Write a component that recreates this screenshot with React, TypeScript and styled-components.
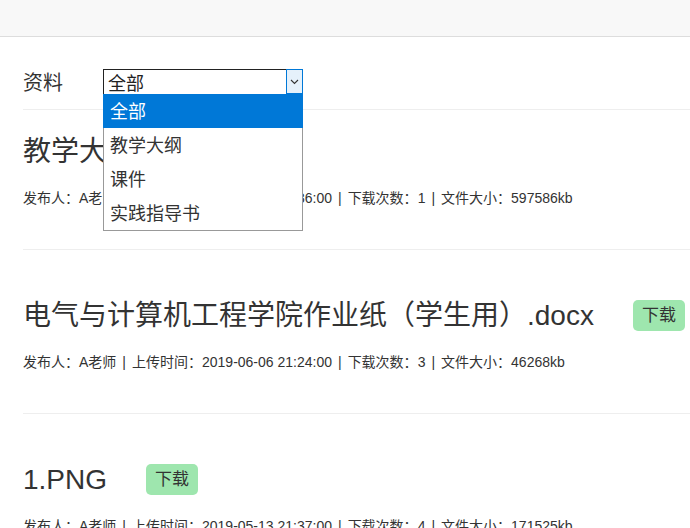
import React from "react";
import styled, { createGlobalStyle } from "styled-components";

const Global = createGlobalStyle`
  html, body { margin: 0; padding: 0; background: #fff; }
  body { font-family: "Liberation Sans", "Noto Sans CJK SC", sans-serif; color: #333; overflow: hidden; }
`;

const Header = styled.div`
  height: 36px;
  background: #f8f8f8;
  border-bottom: 1px solid #ddd;
`;

const Main = styled.div`
  padding: 32px 0 0 23px;
`;

const FilterRow = styled.div`
  display: flex;
  align-items: center;
  height: 25px;
  margin-bottom: 15px;
`;

const Label = styled.span`
  font-size: 20px;
  width: 80px;
  line-height: 25px;
  padding-top: 3px;
  color: #333;
`;

const SelectWrap = styled.div`
  position: relative;
  width: 200px;
`;

const SelectBox = styled.div`
  box-sizing: border-box;
  width: 200px;
  height: 25px;
  border: 1px solid #222;
  border-right: none;
  border-bottom: none;
  display: flex;
`;

const SelectValue = styled.div`
  flex: 1;
  padding: 3px 0 0 4px;
  font-size: 18px;
  line-height: 22px;
  color: #222;
`;

const ArrowBox = styled.div`
  box-sizing: border-box;
  width: 17px;
  height: 25px;
  margin-top: -1px;
  border: 1px solid #0078d7;
  background: #e5f1fb;
  display: flex;
  align-items: center;
  justify-content: center;
`;

const Dropdown = styled.ul`
  position: absolute;
  top: 25px;
  left: 0;
  box-sizing: border-box;
  width: 200px;
  margin: 0;
  padding: 0;
  list-style: none;
  background: #fff;
  border: 1px solid #999;
  border-top: none;
  z-index: 10;
`;

const Option = styled.li<{ $active?: boolean }>`
  box-sizing: border-box;
  height: 34px;
  padding-top: 3px;
  line-height: 31px;
  font-size: 18px;
  background: ${(p) => (p.$active ? "#0078d7" : "#fff")};
  color: ${(p) => (p.$active ? "#fff" : "#333")};
  margin: ${(p) => (p.$active ? "0 -1px 0 -1px" : "0")};
  padding-left: ${(p) => (p.$active ? "7px" : "6px")};
`;

const Item = styled.div<{ $first?: boolean }>`
  border-top: 1px solid #eee;
  padding: ${(p) => (p.$first ? "21px" : "45px")} 0 42px 0;
`;

const TitleRow = styled.div`
  display: flex;
  align-items: center;
  height: 40px;
`;

const Title = styled.h2`
  margin: 0;
  padding-top: 1px;
  font-size: 28px;
  font-weight: normal;
  line-height: 40px;
  color: #333;
  white-space: nowrap;
`;

const DownloadBtn = styled.button`
  margin-left: 39px;
  height: 31px;
  padding: 0 9px;
  border: none;
  border-radius: 5px;
  background: #9ee6ae;
  color: #333;
  font-family: inherit;
  font-size: 17px;
  line-height: 31px;
  flex-shrink: 0;
`;

const Meta = styled.div`
  margin-top: 18px;
  font-size: 14px;
  line-height: 18px;
  color: #333;
  white-space: nowrap;
`;

const Sep = styled.span`
  margin: 0 6px;
`;

const files = [
  { name: "教学大纲.docx", author: "A老师", time: "2019-06-06 21:36:00", count: 1, size: "597586kb" },
  { name: "电气与计算机工程学院作业纸（学生用）.docx", author: "A老师", time: "2019-06-06 21:24:00", count: 3, size: "46268kb" },
  { name: "1.PNG", author: "A老师", time: "2019-05-13 21:37:00", count: 4, size: "171525kb" },
];

const options = ["全部", "教学大纲", "课件", "实践指导书"];

export default function App() {
  return (
    <>
      <Global />
      <Header />
      <Main>
        <FilterRow>
          <Label>资料</Label>
          <SelectWrap>
            <SelectBox>
              <SelectValue>全部</SelectValue>
              <ArrowBox>
                <svg width="9" height="6" viewBox="0 0 9 6">
                  <path d="M1 1 L4.5 4.5 L8 1" fill="none" stroke="#333" strokeWidth="1.1" />
                </svg>
              </ArrowBox>
            </SelectBox>
            <Dropdown>
              {options.map((o, i) => (
                <Option key={o} $active={i === 0}>{o}</Option>
              ))}
            </Dropdown>
          </SelectWrap>
        </FilterRow>
        {files.map((f, i) => (
          <Item key={f.name} $first={i === 0}>
            <TitleRow>
              <Title>{f.name}</Title>
              <DownloadBtn>下载</DownloadBtn>
            </TitleRow>
            <Meta>
              发布人：{f.author}
              <Sep>|</Sep>上传时间：{f.time}
              <Sep>|</Sep>下载次数：{f.count}
              <Sep>|</Sep>文件大小：{f.size}
            </Meta>
          </Item>
        ))}
      </Main>
    </>
  );
}
